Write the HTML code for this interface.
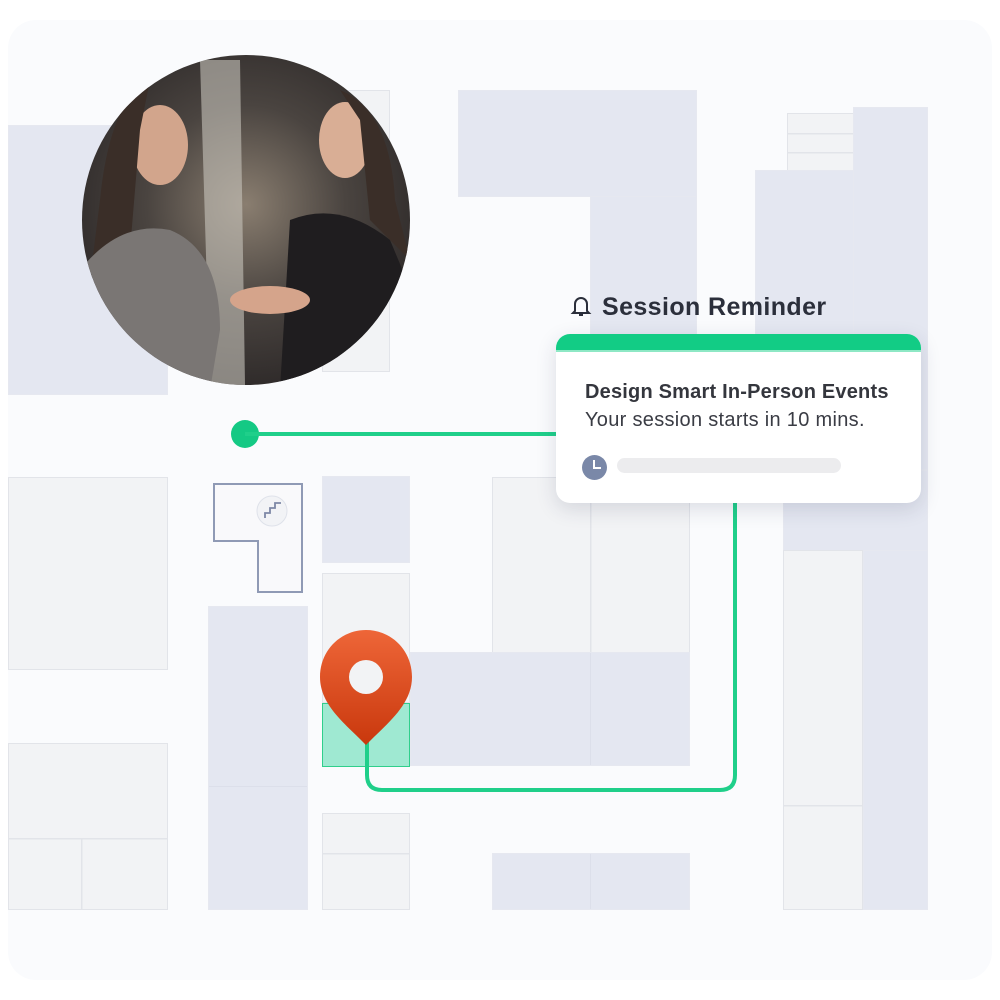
<!DOCTYPE html>
<html><head><style>
body{margin:0;background:#fff;width:1000px;height:1000px;position:relative;overflow:hidden;font-family:"Liberation Sans",sans-serif}
.c{position:absolute;left:8px;top:20px;width:984px;height:960px;border-radius:28px;background:#fafbfd}
.b{position:absolute;box-sizing:border-box}
.l{background:#e4e7f1;border:1px solid #e6e8f0}
.g{background:#f2f3f5;border:1.5px solid #e2e4e9}
</style></head><body>
<div class="c"></div>
<div class="b l" style="left:8px;top:125px;width:160px;height:270px"></div>
<div class="b g" style="left:322px;top:90px;width:68px;height:282px"></div>
<div class="b l" style="left:458px;top:90px;width:239px;height:107px"></div>
<div class="b l" style="left:590px;top:196px;width:107px;height:150px"></div>
<div class="b g" style="left:787px;top:113px;width:68px;height:59px;background:linear-gradient(#e2e4e9,#e2e4e9) 0 19px/100% 1.5px no-repeat,linear-gradient(#e2e4e9,#e2e4e9) 0 38px/100% 1.5px no-repeat,#f2f3f5"></div>
<div class="b l" style="left:755px;top:170px;width:100px;height:300px"></div>
<div class="b l" style="left:853px;top:107px;width:75px;height:363px"></div>
<div class="b g" style="left:8px;top:477px;width:160px;height:193px"></div>
<div class="b" style="left:213px;top:483px;width:90px;height:110px;">
<svg width="90" height="110"><path d="M1 1H89V109H45V58H1Z" fill="#f9f9fb" stroke="#8f9ab5" stroke-width="2"/><circle cx="59" cy="28" r="15" fill="#f2f3f6" stroke="#dfe2ea"/><path d="M52 35v-5h5v-5h5v-5h6" fill="none" stroke="#7d88a6" stroke-width="1.8"/></svg></div>
<div class="b l" style="left:322px;top:476px;width:88px;height:87px"></div>
<div class="b g" style="left:322px;top:573px;width:88px;height:130px"></div>
<div class="b l" style="left:208px;top:606px;width:100px;height:304px;background:linear-gradient(#dcdfea,#dcdfea) 0 179px/100% 1px no-repeat,#e4e7f1"></div>
<div class="b g" style="left:492px;top:477px;width:198px;height:176px;background:linear-gradient(#e2e4e9,#e2e4e9) 97px 0/1.5px 100% no-repeat,#f2f3f5"></div>
<div class="b l" style="left:410px;top:652px;width:280px;height:114px;background:linear-gradient(#dcdfea,#dcdfea) 179px 0/1px 100% no-repeat,#e4e7f1"></div>
<div class="b" style="left:322px;top:703px;width:88px;height:64px;background:#9fe9d2;border:1.5px solid #2fcf8c"></div>
<div class="b g" style="left:322px;top:813px;width:88px;height:97px;background:linear-gradient(#e2e4e9,#e2e4e9) 0 39px/100% 1.5px no-repeat,#f2f3f5"></div>
<div class="b l" style="left:492px;top:853px;width:198px;height:57px;background:linear-gradient(#dcdfea,#dcdfea) 97px 0/1px 100% no-repeat,#e4e7f1"></div>
<div class="b g" style="left:8px;top:743px;width:160px;height:167px;background:linear-gradient(#e2e4e9,#e2e4e9) 0 94px/100% 1.5px no-repeat,linear-gradient(#e2e4e9,#e2e4e9) 72px 94px/1.5px 100% no-repeat,#f2f3f5"></div>
<div class="b l" style="left:783px;top:470px;width:145px;height:82px"></div>
<div class="b g" style="left:783px;top:550px;width:80px;height:360px;background:linear-gradient(#e2e4e9,#e2e4e9) 0 254px/100% 1.5px no-repeat,#f2f3f5"></div>
<div class="b l" style="left:863px;top:550px;width:65px;height:360px"></div>
<svg class="b" style="left:0;top:0" width="1000" height="1000">
<circle cx="245" cy="434" r="14" fill="#14c984"/>
<path d="M245 434H560M735 500V775Q735 790 720 790H382Q367 790 367 775V740" fill="none" stroke="#1fcf8a" stroke-width="4"/>
<defs><linearGradient id="pg" x1="0" y1="0" x2="0" y2="1"><stop offset="0" stop-color="#ee6638"/><stop offset="1" stop-color="#c9380d"/></linearGradient>
<radialGradient id="ph" cx="0.5" cy="0.45" r="0.6"><stop offset="0" stop-color="#8a7e70"/><stop offset="0.5" stop-color="#4a4440"/><stop offset="1" stop-color="#2a2626"/></radialGradient>
<clipPath id="cc"><ellipse cx="246" cy="220" rx="164" ry="165"/></clipPath></defs>
<path d="M366 630C391 630 412 650 412 677C412 706 385 725 366 745C347 725 320 706 320 677C320 650 341 630 366 630Z" fill="url(#pg)"/>
<circle cx="366" cy="677" r="17" fill="#f2f3f5"/>
<g clip-path="url(#cc)">
<rect x="80" y="55" width="332" height="332" fill="url(#ph)"/>
<path d="M200 60L240 60L245 385L210 385Z" fill="#c8c4bc" opacity=".6"/>
<ellipse cx="160" cy="145" rx="28" ry="40" fill="#d2a58c"/>
<ellipse cx="345" cy="140" rx="26" ry="38" fill="#d9ae95"/>
<path d="M150 80Q110 100 100 200L90 280L130 250L140 130Z" fill="#3a2e28"/>
<path d="M340 90Q390 110 395 200L410 260L370 220L360 120Z" fill="#3a2e28"/>
<path d="M80 270Q120 220 170 230Q220 250 220 330L210 390L80 390Z" fill="#7a7674"/>
<path d="M290 220Q340 200 390 240L415 300L415 390L280 390Z" fill="#1f1d1f"/>
<ellipse cx="270" cy="300" rx="40" ry="14" fill="#d5a48b"/>
</g>
</svg>
<div class="b" style="left:570px;top:293px;font-size:25px;font-weight:bold;color:#2b2f3b;letter-spacing:0.4px">
<svg width="22" height="24" style="vertical-align:-3px;margin-right:10px"><path d="M5 17V10a6 6 0 0 1 12 0v7l2 2H3z M9 21h4" fill="none" stroke="#2b2f3b" stroke-width="2"/></svg>Session Reminder</div>
<div class="b" style="left:556px;top:334px;width:365px;height:169px;background:#fff;border-radius:14px;box-shadow:0 6px 20px rgba(40,50,80,.15);overflow:hidden">
<div style="height:16px;background:#12cc85;border-bottom:2px solid #8ee8c5"></div>
<div style="position:absolute;left:29px;top:47px;font-size:20px;font-weight:bold;color:#34363d;letter-spacing:0.2px">Design Smart In-Person Events</div>
<div style="position:absolute;left:29px;top:75px;font-size:20px;color:#3a3c44;letter-spacing:0.3px">Your session starts in 10 mins.</div>
<div style="position:absolute;left:26px;top:121px;width:25px;height:25px;border-radius:50%;background:#7a88a8"><div style="position:absolute;left:11px;top:5px;width:2px;height:9px;background:#fff"></div><div style="position:absolute;left:11px;top:12px;width:8px;height:2px;background:#fff"></div></div>
<div style="position:absolute;left:61px;top:124px;width:224px;height:15px;border-radius:8px;background:#ececee"></div>
</div>
</body></html>
